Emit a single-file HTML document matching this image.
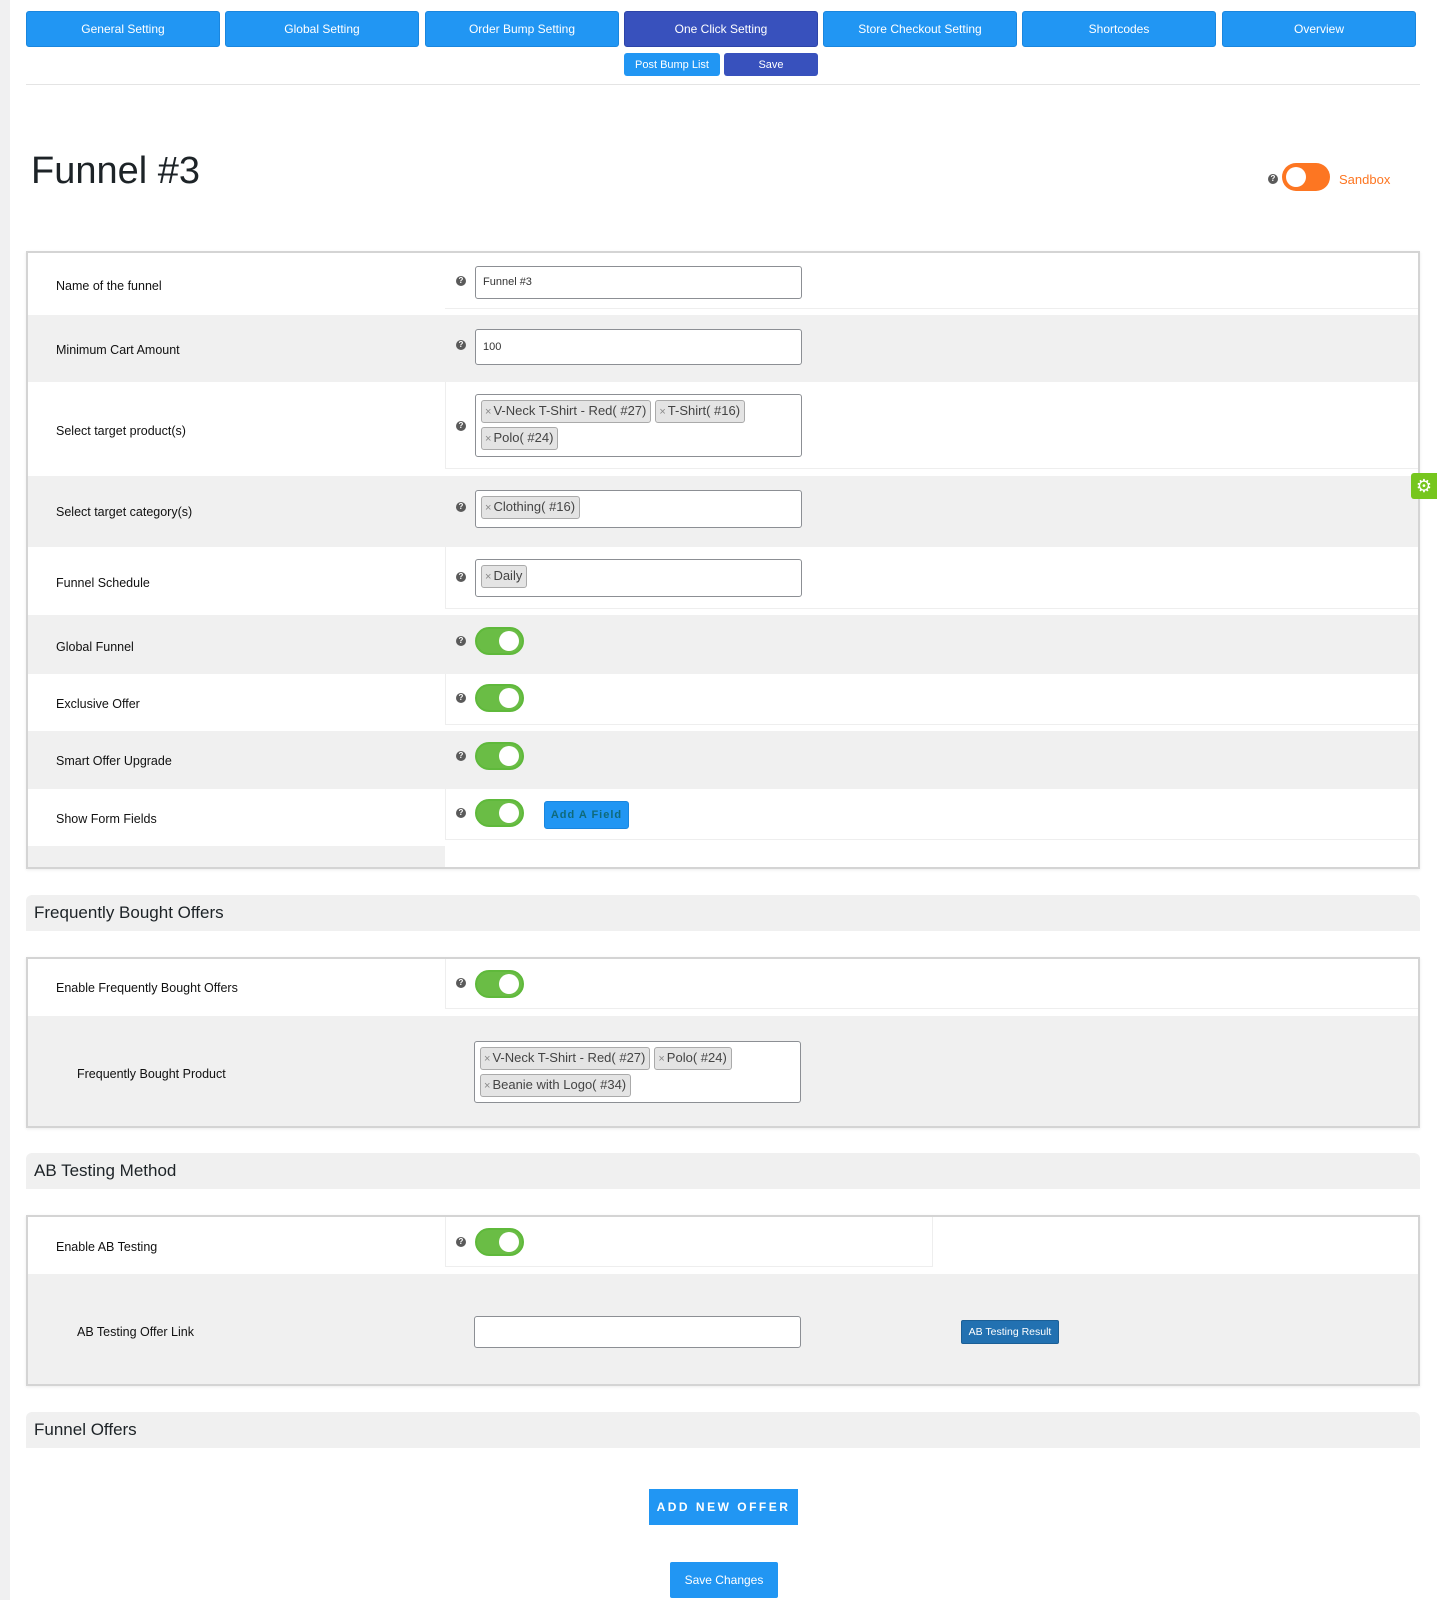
<!DOCTYPE html>
<html><head><meta charset="utf-8">
<style>
*{box-sizing:border-box;margin:0;padding:0}
body{width:1437px;height:1600px;position:relative;background:#fff;font-family:"Liberation Sans",sans-serif;color:#1d2327;overflow:hidden}
.a{position:absolute}
.strip{left:0;top:0;width:10px;height:1600px;background:#f0f0f1}
.tab{top:11px;height:36px;width:194px;background:#2196f3;color:#fff;font-size:12px;display:flex;align-items:center;justify-content:center;border-radius:3px;border:1px solid #1a86de}
.tab.on{background:#3851bd;border-color:#2d44a8}
.sb{top:53px;height:23px;color:#fff;font-size:11px;display:flex;align-items:center;justify-content:center;border-radius:3px}
.box{left:26px;width:1394px;border:2px solid #d4d4d4;box-shadow:0 1px 3px rgba(0,0,0,.08);background:#fff}
.g{background:#f0f0f0}
.lbl{font-size:12.5px;color:#111;transform:translateY(-50%)}
.help{width:10px;height:10px;border-radius:50%;background:#5a5a5a;color:#fff;font-size:8px;font-weight:bold;text-align:center;line-height:10px}
.inp{left:475px;width:327px;background:#fff;border:1px solid #8c8f94;border-radius:3px;font-size:11px;color:#333;padding-left:7px}
.tag{display:inline-block;background:#e4e4e4;border:1px solid #aaa;border-radius:3px;font-size:13px;color:#444;padding:1px 4px 1px 3px;margin:0 4px 4px 0;line-height:17px}
.tag i{font-style:normal;color:#888;font-size:11px;margin-right:2px}
.sel{padding:5px 0 0 5px}
.tg{width:49px;height:28px;border-radius:14px;background:#6abd45;border:2px solid #5fb93b}
.tg:after{content:"";position:absolute;right:3px;top:2px;width:20px;height:20px;border-radius:50%;background:#fff}
.hd{left:26px;width:1394px;height:36px;background:#f0f0f0;border-radius:6px 6px 0 0;font-size:17px;color:#1d2327;padding-left:8px;line-height:36px}
.td{border-bottom:1px solid #eee}
</style></head><body>
<div class="a strip"></div>
<div class="a tab" style="left:26px">General Setting</div>
<div class="a tab" style="left:225px">Global Setting</div>
<div class="a tab" style="left:425px">Order Bump Setting</div>
<div class="a tab on" style="left:624px">One Click Setting</div>
<div class="a tab" style="left:823px">Store Checkout Setting</div>
<div class="a tab" style="left:1022px">Shortcodes</div>
<div class="a tab" style="left:1222px">Overview</div>
<div class="a sb" style="left:624px;width:96px;background:#2196f3">Post Bump List</div>
<div class="a sb" style="left:724px;width:94px;background:#3851bd">Save</div>
<div class="a" style="left:26px;top:84px;width:1394px;height:1px;background:#e4e4e4"></div>

<div class="a" style="left:31px;top:150px;font-size:38px;color:#1d2327;font-weight:300">Funnel #3</div>
<div class="a help" style="left:1268px;top:174px">?</div>
<div class="a" style="left:1282px;top:163px;width:48px;height:28px;border-radius:14px;background:#fd7622"><div class="a" style="left:4px;top:4px;width:20px;height:20px;border-radius:50%;background:#fff"></div></div>
<div class="a" style="left:1339px;top:172px;font-size:13px;color:#fd7622">Sandbox</div>

<!-- box 1 -->
<div class="a box" style="top:251px;height:618px"></div>
<div class="a" style="left:28px;top:253px;width:1390px;height:62px;background:#fff"></div>
<div class="a g" style="left:28px;top:315px;width:1390px;height:67px"></div>
<div class="a g" style="left:28px;top:476px;width:1390px;height:71px"></div>
<div class="a g" style="left:28px;top:615px;width:1390px;height:59px"></div>
<div class="a g" style="left:28px;top:731px;width:1390px;height:58px"></div>
<div class="a g" style="left:28px;top:846px;width:417px;height:21px"></div>
<div class="a td" style="left:445px;top:253px;width:973px;height:56px"></div>
<div class="a td" style="left:445px;top:382px;width:973px;height:87px;border-left:1px solid #eee"></div>
<div class="a td" style="left:445px;top:547px;width:973px;height:62px;border-left:1px solid #eee"></div>
<div class="a td" style="left:445px;top:674px;width:973px;height:51px;border-left:1px solid #eee"></div>
<div class="a td" style="left:445px;top:789px;width:973px;height:51px;border-left:1px solid #eee"></div>

<div class="a lbl" style="left:56px;top:286px">Name of the funnel</div>
<div class="a lbl" style="left:56px;top:350px">Minimum Cart Amount</div>
<div class="a lbl" style="left:56px;top:431px">Select target product(s)</div>
<div class="a lbl" style="left:56px;top:512px">Select target category(s)</div>
<div class="a lbl" style="left:56px;top:583px">Funnel Schedule</div>
<div class="a lbl" style="left:56px;top:647px">Global Funnel</div>
<div class="a lbl" style="left:56px;top:704px">Exclusive Offer</div>
<div class="a lbl" style="left:56px;top:761px">Smart Offer Upgrade</div>
<div class="a lbl" style="left:56px;top:819px">Show Form Fields</div>

<div class="a help" style="left:456px;top:276px">?</div>
<div class="a help" style="left:456px;top:340px">?</div>
<div class="a help" style="left:456px;top:421px">?</div>
<div class="a help" style="left:456px;top:502px">?</div>
<div class="a help" style="left:456px;top:572px">?</div>
<div class="a help" style="left:456px;top:636px">?</div>
<div class="a help" style="left:456px;top:693px">?</div>
<div class="a help" style="left:456px;top:751px">?</div>
<div class="a help" style="left:456px;top:808px">?</div>

<div class="a inp" style="top:266px;height:33px;line-height:31px">Funnel #3</div>
<div class="a inp" style="top:329px;height:36px;line-height:34px">100</div>
<div class="a inp sel" style="top:394px;height:63px"><span class="tag"><i>×</i>V-Neck T-Shirt - Red( #27)</span><span class="tag"><i>×</i>T-Shirt( #16)</span><span class="tag"><i>×</i>Polo( #24)</span></div>
<div class="a inp sel" style="top:490px;height:38px"><span class="tag"><i>×</i>Clothing( #16)</span></div>
<div class="a inp sel" style="top:559px;height:38px"><span class="tag"><i>×</i>Daily</span></div>

<div class="a tg" style="left:475px;top:627px"></div>
<div class="a tg" style="left:475px;top:684px"></div>
<div class="a tg" style="left:475px;top:742px"></div>
<div class="a tg" style="left:475px;top:799px"></div>
<div class="a" style="left:544px;top:801px;width:85px;height:28px;background:#2196f3;border:1px solid #1a86de;border-radius:3px;color:#0f6a7a;font-size:11px;font-weight:bold;letter-spacing:1px;text-align:center;line-height:26px">Add A Field</div>

<div class="a" style="left:1411px;top:473px;width:26px;height:26px;background:#76c61e;border-radius:3px 0 0 3px;color:#fff;font-size:18px;text-align:center;line-height:26px">⚙</div>

<!-- Frequently bought -->
<div class="a hd" style="top:895px">Frequently Bought Offers</div>
<div class="a box" style="top:957px;height:171px"></div>
<div class="a g" style="left:28px;top:1016px;width:1390px;height:110px"></div>
<div class="a td" style="left:445px;top:959px;width:973px;height:50px;border-left:1px solid #eee"></div>
<div class="a lbl" style="left:56px;top:988px">Enable Frequently Bought Offers</div>
<div class="a help" style="left:456px;top:978px">?</div>
<div class="a tg" style="left:475px;top:970px"></div>
<div class="a lbl" style="left:77px;top:1074px">Frequently Bought Product</div>
<div class="a inp sel" style="left:474px;top:1041px;height:62px"><span class="tag"><i>×</i>V-Neck T-Shirt - Red( #27)</span><span class="tag"><i>×</i>Polo( #24)</span><span class="tag"><i>×</i>Beanie with Logo( #34)</span></div>

<!-- AB testing -->
<div class="a hd" style="top:1153px">AB Testing Method</div>
<div class="a box" style="top:1215px;height:171px"></div>
<div class="a g" style="left:28px;top:1274px;width:1390px;height:110px"></div>
<div class="a" style="left:445px;top:1217px;width:488px;height:50px;border:1px solid #eee;border-top:none"></div>
<div class="a lbl" style="left:56px;top:1247px">Enable AB Testing</div>
<div class="a help" style="left:456px;top:1237px">?</div>
<div class="a tg" style="left:475px;top:1228px"></div>
<div class="a lbl" style="left:77px;top:1332px">AB Testing Offer Link</div>
<div class="a inp" style="left:474px;top:1316px;height:32px"></div>
<div class="a" style="left:961px;top:1320px;width:98px;height:24px;background:#2271b1;border:1px solid #1b5f96;border-radius:2px;color:#fff;font-size:10.5px;text-align:center;line-height:22px">AB Testing Result</div>

<div class="a hd" style="top:1412px">Funnel Offers</div>
<div class="a" style="left:649px;top:1489px;width:149px;height:36px;background:#2196f3;color:#fff;font-size:12px;font-weight:bold;letter-spacing:2.5px;text-align:center;line-height:36px">ADD NEW OFFER</div>
<div class="a" style="left:670px;top:1562px;width:108px;height:36px;background:#2196f3;border-radius:2px;color:#fff;font-size:12px;text-align:center;line-height:36px">Save Changes</div>
</body></html>
